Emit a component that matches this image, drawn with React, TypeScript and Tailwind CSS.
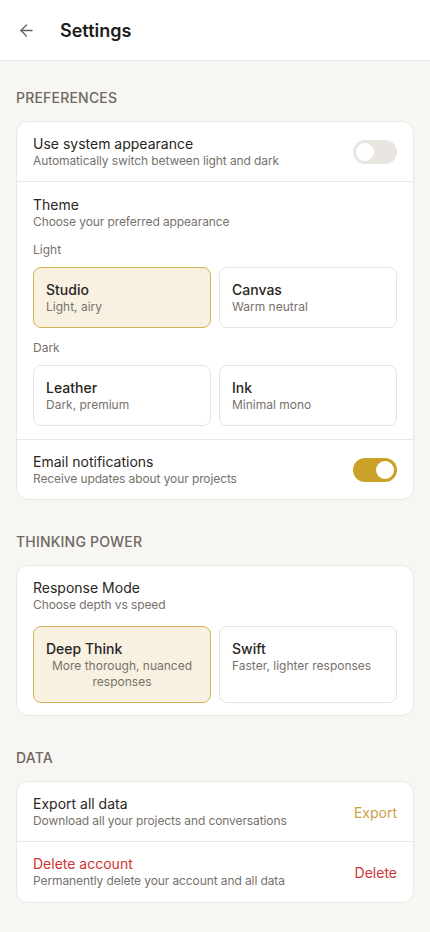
import { ArrowLeft } from 'lucide-react'

const font = { fontFamily: 'Inter, "Noto Sans", sans-serif' }

function Toggle({ on }: { on: boolean }) {
  return (
    <div
      className={`w-[44px] h-[24px] rounded-full flex items-center px-[3px] shrink-0 ${
        on ? 'bg-[#c9a227] justify-end' : 'bg-[#e9e6e1] justify-start'
      }`}
    >
      <div className="w-[18px] h-[18px] rounded-full bg-white" />
    </div>
  )
}

function SectionLabel({ children, first }: { children: React.ReactNode; first?: boolean }) {
  return (
    <h2
      className={`px-4 pb-[14px] text-[14px] leading-[18px] font-medium tracking-[0.2px] text-[#6e6862] ${
        first ? 'pt-[28px]' : 'pt-[33px]'
      }`}
    >
      {children}
    </h2>
  )
}

function Option({ title, sub, selected, center }: { title: string; sub: string; selected?: boolean; center?: boolean }) {
  return (
    <div
      className={`rounded-[8px] border px-[12px] pt-[13px] pb-[12px] ${
        selected ? 'bg-[#f8f1e2] border-[#d4b255]' : 'bg-white border-[#e6e3de]'
      }`}
    >
      <p className="text-[14px] leading-[18px] font-medium text-[#2a2622]">{title}</p>
      <p className={`text-[12px] leading-[16px] text-[#77716b] ${center ? 'text-center' : ''}`}>{sub}</p>
    </div>
  )
}

function Row({ title, sub, children, danger, tall }: { title: string; sub: string; children?: React.ReactNode; danger?: boolean; tall?: boolean }) {
  return (
    <div className={`flex items-center justify-between px-4 pt-[13px] ${tall ? 'pb-[13px]' : 'pb-[12px]'}`}>
      <div>
        <p className={`text-[14px] leading-[18px] ${danger ? 'text-[#cf3434]' : 'text-[#2a2622]'}`}>{title}</p>
        <p className="text-[12px] leading-[16px] text-[#77716b] tracking-[-0.1px]">{sub}</p>
      </div>
      {children}
    </div>
  )
}

export default function App() {
  return (
    <div className="min-h-[932px] bg-[#f8f6f2] pb-8" style={font}>
      <header className="h-[61px] bg-white border-b border-[#e7e4df] flex items-center px-[17px] gap-[24px]">
        <ArrowLeft size={19} strokeWidth={1.6} className="text-[#66615c]" />
        <h1 className="text-[18px] font-semibold text-[#201d1a]">Settings</h1>
      </header>

      <SectionLabel first>PREFERENCES</SectionLabel>
      <div className="mx-4 bg-white rounded-[12px] border border-[#ebe8e3]">
        <Row title="Use system appearance" sub="Automatically switch between light and dark">
          <Toggle on={false} />
        </Row>
        <div className="border-t border-[#ebe8e3] px-4 pt-[14px] pb-[13px]">
          <p className="text-[14px] leading-[18px] text-[#2a2622]">Theme</p>
          <p className="text-[12px] leading-[16px] text-[#77716b] tracking-[-0.1px]">Choose your preferred appearance</p>
          <p className="text-[12px] leading-[16px] mt-[12px] mb-[9px] text-[#77716b]">Light</p>
          <div className="grid grid-cols-2 gap-[8px]">
            <Option title="Studio" sub="Light, airy" selected />
            <Option title="Canvas" sub="Warm neutral" />
          </div>
          <p className="text-[12px] leading-[16px] mt-[12px] mb-[9px] text-[#77716b]">Dark</p>
          <div className="grid grid-cols-2 gap-[8px]">
            <Option title="Leather" sub="Dark, premium" />
            <Option title="Ink" sub="Minimal mono" />
          </div>
        </div>
        <div className="border-t border-[#ebe8e3]">
          <Row title="Email notifications" sub="Receive updates about your projects">
            <Toggle on />
          </Row>
        </div>
      </div>

      <SectionLabel>THINKING POWER</SectionLabel>
      <div className="mx-4 bg-white rounded-[12px] border border-[#ebe8e3] px-4 pt-[13px] pb-[12px]">
        <p className="text-[14px] leading-[18px] text-[#2a2622]">Response Mode</p>
        <p className="text-[12px] leading-[16px] text-[#77716b] tracking-[-0.1px]">Choose depth vs speed</p>
        <div className="grid grid-cols-2 gap-[8px] mt-[13px]">
          <Option title="Deep Think" sub="More thorough, nuanced responses" selected center />
          <Option title="Swift" sub="Faster, lighter responses" />
        </div>
      </div>

      <SectionLabel>DATA</SectionLabel>
      <div className="mx-4 bg-white rounded-[12px] border border-[#ebe8e3]">
        <Row title="Export all data" sub="Download all your projects and conversations">
          <span className="text-[14px] text-[#c9a23f]">Export</span>
        </Row>
        <div className="border-t border-[#ebe8e3]">
          <Row title="Delete account" sub="Permanently delete your account and all data" danger tall>
            <span className="text-[14px] text-[#cf3434]">Delete</span>
          </Row>
        </div>
      </div>
    </div>
  )
}
